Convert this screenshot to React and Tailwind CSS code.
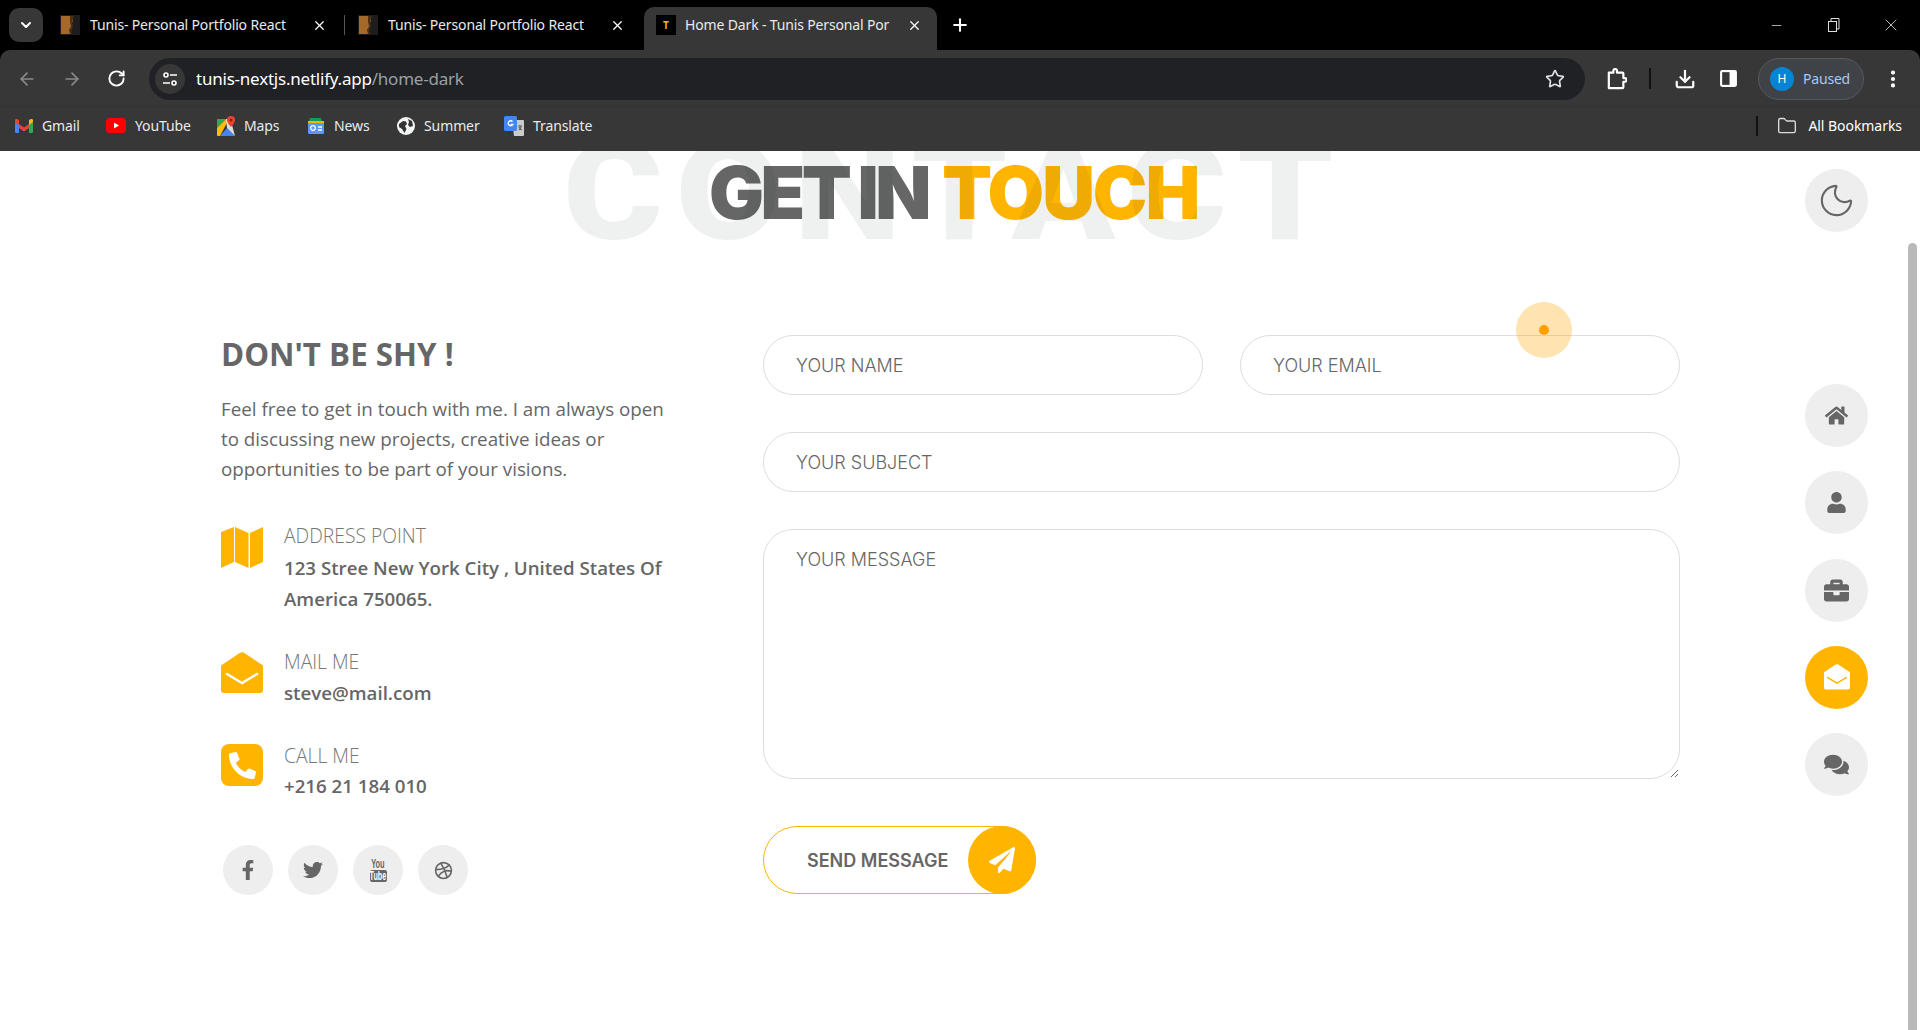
import React from "react";
import { FaHome, FaUser, FaBriefcase, FaComments, FaFacebookF, FaTwitter, FaPaperPlane, FaPhoneAlt } from "react-icons/fa";
import { FiDribbble } from "react-icons/fi";
import { Moon, ArrowLeft, ArrowRight, RotateCw, Star, Download, Plus, X, ChevronDown, Minus, Folder, MoreVertical } from "lucide-react";

const MapIcon = ({ className }) => (
  <svg viewBox="0 0 42 42" className={className} fill="currentColor">
    <path d="M0 5 13 0V35L0 41Z" /><path d="M14 0 27.500 6V41L14 35Z" /><path d="M29 6 42 0V35L29 41Z" />
  </svg>
);
const EnvOpen = ({ className, stroke }) => (
  <svg viewBox="0 0 42 42" className={className}>
    <path fill="currentColor" d="M19 .8a4 4 0 0 1 4 0L42 13.500V38a3 3 0 0 1-3 3H3a3 3 0 0 1-3-3V13.500Z" />
    <path fill="none" stroke={stroke} strokeWidth="2.5" strokeLinecap="round" d="M6 22 21 31 36 22" />
  </svg>
);
const Gmail = () => (
  <svg viewBox="0 0 18 14" className="w-[18px] h-[14px]">
    <path fill="#4285f4" d="M0 3v10a1 1 0 0 0 1 1h3V5Z" /><path fill="#34a853" d="M14 5v9h3a1 1 0 0 0 1-1V3Z" />
    <path fill="#ea4335" d="M4 5v4l5 3.500L14 9V5L9 8.500Z" /><path fill="#ea4335" d="M0 3 4 6V1L2.500.2A1.600 1.600 0 0 0 0 1.500Z" />
    <path fill="#fbbc04" d="M18 3 14 6V1l1.500-.8A1.600 1.600 0 0 1 18 1.500Z" />
  </svg>
);
const YouTube = () => (
  <svg viewBox="0 0 20 15" className="w-5 h-[15px]">
    <rect width="20" height="15" rx="4" fill="#f00" /><path d="M8 4.500 13 7.500 8 10.500Z" fill="#fff" />
  </svg>
);
const Maps = () => (
  <svg viewBox="0 0 18 20" className="w-[18px] h-5">
    <path fill="#34a853" d="M0 3h9L0 12Z" /><path fill="#fbbc04" d="M0 12 9 3h3L3 20H1a1 1 0 0 1-1-1Z" /><path fill="#4285f4" d="M3 20 10 12l8 8Z" />
    <path fill="#ddd" d="M9 3h6v6L18 20 10 12Z" /><path fill="#ea4335" d="M14 0a4 4 0 0 1 4 4c0 3-4 7-4 7s-4-4-4-7a4 4 0 0 1 4-4Z" /><circle cx="14" cy="4" r="1.500" fill="#8c1d18" />
  </svg>
);
const News = () => (
  <svg viewBox="0 0 18 18" className="w-[18px] h-[18px]">
    <path fill="#0f9d58" d="M3 1h11l1 4H2Z" /><path fill="#f4b400" d="M1 4h16v3H1Z" /><rect x="1" y="6" width="16" height="11" rx="1" fill="#5e97f6" />
    <circle cx="6" cy="11" r="2.300" fill="none" stroke="#fff" strokeWidth="1.200" /><path stroke="#fff" strokeWidth="1.300" d="M11 10h4M11 13h4" />
  </svg>
);
const Globe = () => (
  <svg viewBox="0 0 18 18" className="w-[18px] h-[18px]">
    <circle cx="9" cy="9" r="9" fill="#f1f3f4" />
    <path fill="#333" d="M2 7 6 4l3 .500 1 2.500-2 2 1.500 3-2 4L5 12 2 10ZM11 2l4 2 1 5-3 1-2-2 1-3Z" />
  </svg>
);
const Translate = () => (
  <svg viewBox="0 0 20 20" className="w-5 h-5">
    <path fill="#ccc" d="M8 4h11a1 1 0 0 1 1 1v14a1 1 0 0 1-1 1H10Z" /><rect width="13" height="15" rx="1.500" fill="#4285f4" />
    <path fill="none" stroke="#fff" strokeWidth="1.300" d="M8.500 5.500a2.500 2.500 0 1 0 .4 3H6.500" /><path stroke="#666" strokeWidth="1.200" d="M14 10h4M16 9v1M15 14c1.500-1 2-2 2.300-4M15 11c.5 1.500 1.500 2.500 3 3" fill="none" />
  </svg>
);
const BookFav = () => (
  <svg viewBox="0 0 20 20" className="w-5 h-5 shrink-0">
    <rect width="20" height="20" fill="#1d1d1d" /><path fill="#a56a2a" d="M1 1h12v5l-2 3 1 4-2 3 1 3H1Z" /><path fill="#4b3015" d="M10 1h4l-2 6 1 4-2 4 1 4h-2l-1-4 2-4-1-4Z" />
  </svg>
);
const SiteInfo = () => (
  <svg viewBox="0 0 16 16" className="w-4 h-4" fill="none" stroke="#fff" strokeWidth="1.600">
    <circle cx="4" cy="4" r="2" /><path d="M8 4h7M1 12h7" /><circle cx="12" cy="12" r="2" />
  </svg>
);
const Extension = () => (
  <svg viewBox="0 0 22 24" className="w-[20px] h-[22px]" fill="none" stroke="#fff" strokeWidth="2.400" strokeLinejoin="round">
    <path d="M2 5h5V3a2 2 0 0 1 4 0v2h6a1 1 0 0 1 1 1v5h1.500a2 2 0 0 1 0 4H18v6a1 1 0 0 1-1 1H2Z" />
  </svg>
);

const chrome = "font-['Noto_Sans',sans-serif]";
const tabText = "w-[206px] overflow-hidden whitespace-nowrap text-[14px] leading-5 text-[#e8eaed] tracking-[-0.15px]";

const Tab = ({ fav, title, sep }) => (
  <div className="flex items-center h-full w-[298px] pb-[7px]">
    {fav}
    <span className={`ml-[10px] ${tabText}`}>{title}</span>
    <X size={15} strokeWidth={2} className="ml-[16px] text-white" />
    {sep && <div className="ml-[17px] w-px h-[20px] bg-[#555]" />}
  </div>
);

const Bookmark = ({ icon, label, w }) => (
  <div className={`flex items-center gap-[9px] ${w}`}>
    {icon}
    <span className="text-[14px] leading-5 text-[#e8eaed] tracking-[-0.1px]">{label}</span>
  </div>
);

const ContactItem = ({ icon, label, children, mb, pt, vm }) => (
  <div className={`flex ${mb}`}>
    <div className={`w-[63px] shrink-0 text-[#ffb400] ${pt}`}>{icon}</div>
    <div>
      <div className="text-[19.3px] leading-[32px] text-[#777] font-light">{label}</div>
      <div className={`text-[18.7px] leading-[31px] font-semibold text-[#666] ${vm}`}>{children}</div>
    </div>
  </div>
);

const Social = ({ children }) => (
  <div className="w-[50px] h-[50px] rounded-full bg-[#eee] flex items-center justify-center text-[#666]">{children}</div>
);

const NavBtn = ({ children, active, cls }) => (
  <div className={`w-[63px] h-[63px] rounded-full flex items-center justify-center ${active ? "bg-[#ffb400] text-white" : "bg-[#eee] text-[#666]"} ${cls}`}>{children}</div>
);

const inputCls = "h-[60px] rounded-[30px] border border-[#ddd] bg-white px-[32px] text-[18px] font-light outline-none placeholder:text-[#666] font-['Inter',sans-serif]";

export default function App() {
  return (
    <div className="w-[1920px] h-[1030px] overflow-hidden flex flex-col bg-white font-['Open_Sans',sans-serif]">
      {/* browser chrome */}
      <div className={`${chrome} h-[151px] shrink-0 bg-black flex flex-col`}>
        <div className="h-[50px] shrink-0 flex items-end relative">
          <div className="absolute left-[9px] top-[8px] w-[34px] h-[34px] rounded-[10px] bg-[#373737] flex items-center justify-center text-white">
            <ChevronDown size={16} strokeWidth={3} />
          </div>
          <div className="h-[43px] flex items-center pl-[60px]">
            <Tab sep fav={<BookFav />} title="Tunis- Personal Portfolio React" />
            <Tab fav={<BookFav />} title="Tunis- Personal Portfolio React" />
            <div className="-ml-[12px] h-full w-[293px] rounded-t-[10px] bg-[#373737] pl-[12px] pb-[7px] flex items-center">
              <div className="w-5 h-5 shrink-0 bg-black flex items-center justify-center text-[#ffb400] text-[10px] font-bold">T</div>
              <span className={`ml-[9px] ${tabText}`}>Home Dark - Tunis Personal Por</span>
              <X size={15} strokeWidth={2} className="ml-[16px] text-white" />
            </div>
            <Plus size={20} strokeWidth={2.5} className="text-white ml-[13px] mb-[7px]" />
          </div>
          <div className="ml-auto h-[50px] flex items-center text-[#ddd] pr-[19px]">
            <Minus size={15} strokeWidth={1.2} />
            <svg viewBox="0 0 14 14" className="ml-[43px] w-[14px] h-[14px]" fill="none" stroke="currentColor"><rect x="1.500" y="3.500" width="8" height="10" /><path d="M4 3V.5h8V11H10" /></svg>
            <X size={20} strokeWidth={1} className="ml-[40px]" />
          </div>
        </div>
        <div className="h-[57px] shrink-0 bg-[#373737] rounded-t-[10px] border-b border-[#333] pt-[1px] flex items-center text-[#e8eaed]">
          <ArrowLeft size={20} className="ml-[17px] text-[#8a8a8a]" />
          <ArrowRight size={20} className="ml-[25px] text-[#8a8a8a]" />
          <RotateCw size={19} strokeWidth={2.4} className="ml-[25px] text-white" />
          <div className="ml-[23px] w-[1436px] h-[42px] rounded-full bg-[#202124] flex items-center">
            <div className="ml-[6px] w-[30px] h-[30px] rounded-full bg-[#373737] flex items-center justify-center"><SiteInfo /></div>
            <span className="ml-[11px] text-[17px] leading-6 tracking-[-0.22px] text-white">tunis-nextjs.netlify.app<span className="text-[#9aa0a6]">/home-dark</span></span>
            <Star size={20} strokeWidth={2} className="ml-auto mr-[20px] text-[#e0e0e0]" />
          </div>
          <div className="ml-[22px]"><Extension /></div>
          <div className="ml-[22px] w-[2px] h-[21px] bg-[#111]" />
          <Download size={22} strokeWidth={2.4} className="ml-[23px] text-white" />
          <svg viewBox="0 0 18 18" className="ml-[23px] w-[19px] h-[19px]"><rect x="1" y="1" width="16" height="16" rx="2" fill="#fff" /><rect x="3" y="3" width="7" height="12" fill="#373737" /></svg>
          <div className="ml-[20px] w-[106px] h-[42px] rounded-full border border-[#55595e] bg-[#3f4347] flex items-center pl-[11px]">
            <div className="w-[24px] h-[24px] rounded-full bg-[#0484d4] flex items-center justify-center text-[12px] text-white">H</div>
            <span className="ml-[9px] text-[14px] text-[#a8c7fa] tracking-[-0.2px]">Paused</span>
          </div>
          <MoreVertical size={22} strokeWidth={2.6} className="ml-[18px] text-white" />
        </div>
        <div className="flex-1 bg-[#373737] flex items-center pl-[15px] pb-[7px]">
          <Bookmark w="w-[91px]" icon={<Gmail />} label="Gmail" />
          <Bookmark w="w-[111px]" icon={<YouTube />} label="YouTube" />
          <Bookmark w="w-[90px]" icon={<Maps />} label="Maps" />
          <Bookmark w="w-[90px]" icon={<News />} label="News" />
          <Bookmark w="w-[107px]" icon={<Globe />} label="Summer" />
          <Bookmark w="w-auto" icon={<Translate />} label="Translate" />
          <div className="ml-auto w-[2px] h-[20px] bg-[#111]" />
          <Folder size={20} strokeWidth={1.6} className="ml-[19px] text-[#ddd]" />
          <span className="ml-[11px] mr-[18px] text-[14px] text-white tracking-[-0.05px]">All Bookmarks</span>
        </div>
      </div>

      {/* page */}
      <div className="relative flex-1 overflow-hidden">
        <h1 className="pt-[2px] pl-[709px] h-[184px] flex gap-[14px] text-[73px] leading-[80px] font-black font-['Inter',sans-serif] whitespace-nowrap text-[#666]">
          <span className="tracking-[-3.5px] [word-spacing:-2px]">GET IN</span>
          <span className="text-[#ffb400] tracking-[-2px]">TOUCH</span>
        </h1>
        <div className="absolute left-[563px] top-[-38px] origin-left scale-x-[1.12] text-[136px] leading-[160px] font-black font-['Roboto',sans-serif] tracking-[11.5px] text-[rgba(30,37,48,0.07)] whitespace-nowrap">CONTACT</div>

        <div className="flex pl-[221px]">
          <div className="w-[542px] shrink-0 -mt-[1px]">
            <h2 className="text-[31.3px] leading-[40px] font-bold text-[#666]">DON'T BE SHY !</h2>
            <p className="mt-[20px] text-[18.8px] leading-[30px] text-[#666]">
              Feel free to get in touch with me. I am always open<br />to discussing new projects, creative ideas or<br />opportunities to be part of your visions.
            </p>
            <div className="mt-[36px]">
              <ContactItem mb="mb-[32px]" pt="pt-[7px]" icon={<MapIcon className="w-[42px] h-[42px]" />} label="ADDRESS POINT">
                123 Stree New York City , United States Of<br />America 750065.
              </ContactItem>
              <ContactItem mb="mb-[32px]" pt="pt-[6px]" vm="-mt-[1px]" icon={<EnvOpen className="w-[42px] h-[42px]" stroke="#fff" />} label="MAIL ME">steve@mail.com</ContactItem>
              <ContactItem mb="mb-[44px]" pt="pt-[4px]" vm="-mt-[2px]" icon={<div className="w-[42px] h-[42px] rounded-[8px] bg-[#ffb400] flex items-center justify-center text-white"><FaPhoneAlt size={27} /></div>} label="CALL ME">+216 21 184 010</ContactItem>
            </div>
            <div className="flex gap-[15px] pl-[2px]">
              <Social><FaFacebookF size={20} /></Social>
              <Social><FaTwitter size={20} /></Social>
              <Social>
                <div className="flex flex-col items-center leading-none font-['Liberation_Sans',sans-serif] font-bold">
                  <span className="text-[12px] leading-[11px] scale-x-[0.62]">You</span>
                  <span className="bg-[#666] text-white text-[12px] leading-[12px] rounded-[2px] w-[17px] flex justify-center"><span className="scale-x-[0.6]">Tube</span></span>
                </div>
              </Social>
              <Social><FiDribbble size={19} /></Social>
            </div>
          </div>
          <form className="w-[917px] flex flex-col gap-[37px]">
            <div className="flex gap-[37px]">
              <input placeholder="YOUR NAME" className={`${inputCls} w-[440px]`} />
              <input placeholder="YOUR EMAIL" className={`${inputCls} w-[440px]`} />
            </div>
            <input placeholder="YOUR SUBJECT" className={inputCls} />
            <textarea placeholder="YOUR MESSAGE" className="h-[250px] rounded-[30px] border border-[#ddd] bg-white px-[32px] pt-[18px] text-[18px] font-light leading-6 outline-none placeholder:text-[#666] font-['Inter',sans-serif]" />
            <button type="button" className="mt-[10px] w-[273px] h-[68px] rounded-full border border-[#ffb400] flex items-center pl-[43px] text-[#666] font-['Inter',sans-serif] font-semibold text-[18px]">
              <span className="whitespace-nowrap">SEND MESSAGE</span>
              <span className="ml-auto -mr-px w-[68px] h-[68px] rounded-full bg-[#ffb400] flex items-center justify-center text-white shrink-0"><FaPaperPlane size={26} /></span>
            </button>
          </form>
        </div>

        {/* fixed side switch & nav */}
        <NavBtn cls="absolute left-[1805px] top-[18px]"><Moon size={39} strokeWidth={1.3} /></NavBtn>
        <div className="absolute left-[1805px] top-[233px] flex flex-col gap-[24.25px]">
          <NavBtn><FaHome size={23} /></NavBtn>
          <NavBtn><FaUser size={21} /></NavBtn>
          <NavBtn><FaBriefcase size={25} /></NavBtn>
          <NavBtn active><EnvOpen className="w-[26px] h-[26px]" stroke="#ffb400" /></NavBtn>
          <NavBtn><FaComments size={25} /></NavBtn>
        </div>
        {/* scrollbar thumb */}
        <div className="absolute left-[1908px] top-[92px] bottom-[-8px] w-[9px] rounded-full bg-[#b9b9b9]" />
        {/* cursor */}
        <div className="absolute left-[1516px] top-[151px] w-[56px] h-[56px] rounded-full bg-[rgba(255,165,0,0.3)] flex items-center justify-center">
          <div className="w-[10px] h-[10px] rounded-full bg-[#ff9f00]" />
        </div>
      </div>
    </div>
  );
}
